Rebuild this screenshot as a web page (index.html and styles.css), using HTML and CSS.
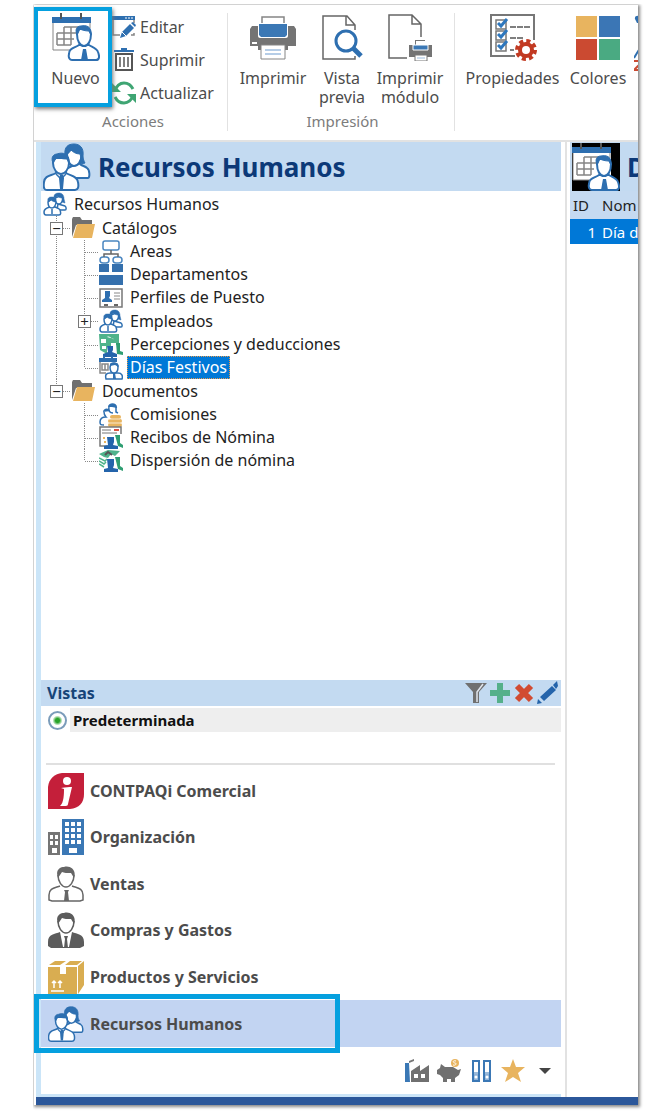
FILE: index.html
```html
<!DOCTYPE html>
<html lang="es">
<head>
<meta charset="utf-8">
<meta name="viewport" content="width=device-width, initial-scale=1">
<title>Recursos Humanos</title>
<link rel="stylesheet" href="styles.css">
</head>
<body>
<svg class="sprite" aria-hidden="true">
  <symbol id="people" viewBox="0 0 48 48">
    <g fill="#fff" stroke="#2e6fb0" stroke-width="2">
      <path d="M29 23c-2 1-4 2-6 3v9h22c2 0 2-8-1-10-2-2-5-2-7-4l-1-4h-7z"/>
      <path d="M24 11c0 7 3 12 7 12s8-5 8-12l-5-4h-8z"/>
      <path d="M22 12C21 4 25 1 31 1s10 4 9 12c0 3 1 5 2 7-2 1-5 1-6-1 2-3 2-5 1-8-4 0-7-2-9-4-1 2-3 4-6 5z" fill="#2e6fb0" stroke-width="1"/>
      <path d="M13 30c-5 3-11 2-12 9-1 7 1 8 3 8h28c3 0 4-3 3-8-1-6-7-6-12-9l-1-4h-8z"/>
      <path d="M10 20c0 6 4 11 8 11s8-5 8-11l-1-5H11z"/>
      <path d="M10 20c-3-7 2-9 4-9 5-2 13-1 12 9-1-1-1-3-2-4-5 0-8-1-10-2-1 2-3 4-4 6z" fill="#2e6fb0" stroke-width="1"/>
    </g>
    <path d="M17 32h3l1 3-1 11h-3l-1-11z" fill="#2e6fb0"/>
    <path d="M13 31l4 4M23 31l-4 4" stroke="#2e6fb0" stroke-width="1.500"/>
  </symbol>
  <symbol id="people-small" viewBox="0 0 24 24">
    <g fill="#fff" stroke="#2e6fb0" stroke-width="1.500">
      <path d="M15 12l7 2c1.500 1 1.500 4 0 4h-8z"/>
      <path d="M12 6c0 4 2 6 4 6s4-3 4-6l-3-2z"/>
      <path d="M11 5c0-3 2-4 5-4s5 2 5 6l1 4-3-1V6c-2 0-4-1-4-2-1 1-2 1-4 1z" fill="#2e6fb0" stroke-width=".5"/>
      <path d="M7 15c-4 1-6 2-6 5 0 2 1 3 2 3h13c2 0 2-2 1-5-1-2-3-2-5-3z"/>
      <path d="M5 10c0 4 2 6 4 6s4-3 4-6l-4-3z"/>
      <path d="M5 10c-1-5 2-5 4-5s5 0 4 5c-2 0-4-1-5-2-1 1-2 1-3 2z" fill="#2e6fb0" stroke-width=".5"/>
      <path d="M9 17v5"/>
    </g>
  </symbol>
  <symbol id="calendar" viewBox="0 0 48 48">
    <path d="M1 5h38v27h-9l-7 5H1z" fill="#fff"/>
    <path d="M1 10v27h18M38 10v5" fill="none" stroke="#858585"/>
    <path d="M0 4h39v6H0z" fill="#2e6fb0"/>
    <path d="M9 0v6M29 0v6" stroke="#555" stroke-width="2"/>
    <g fill="none" stroke="#858585" stroke-width="1.500"><path d="M12 14h15M5 20h22M5 26h17M5 32h14M5 20v12M12 14v18M19 14v18M26 14v4"/></g>
    <g fill="#fff" stroke="#2e6fb0" stroke-width="2">
      <path d="M27 32c-4 3-10 3-10 9-1 4 1 6 3 6h24c3 0 4-3 2-8-1-4-6-5-9-7z"/>
      <path d="M25 21c0 7 3 12 7 12s7-5 7-12l-2-5H26z"/>
      <path d="M25 22c-3-8 2-9 4-9 5-1 11 0 10 9l-2-4c-4 0-7-1-9-2-1 2-2 4-3 6z" fill="#2e6fb0" stroke-width="1"/>
    </g>
    <path d="M31 36h3l2 11h-7z" fill="#2e6fb0"/>
  </symbol>
  <symbol id="edit" viewBox="0 0 24 24">
    <path d="M1 3v17h7M22 4v4M22 18v2h-3" fill="none" stroke="#858585" stroke-width="1.500"/>
    <path d="M0 1h23v4H0z" fill="#2e6fb0"/><path d="M13 3h2M16 3h2M19 3h2" stroke="#fff" stroke-width="1"/>
    <path d="M10 17L18 9l4 4-8 8-6 2zM19 8l2-1 3 3-1 2z" fill="#2e6fb0"/><path d="M10 17l4 4" stroke="#fff"/>
  </symbol>
  <symbol id="trash" viewBox="0 0 24 24">
    <path d="M2 3h20M9 1h6" stroke="#2e6fb0" stroke-width="2"/>
    <path d="M4 6h16v16H4z" fill="#fff" stroke="#555" stroke-width="2"/><path d="M8 9v10M12 9v10M16 9v10" stroke="#555" stroke-width="1.500"/>
  </symbol>
  <symbol id="refresh" viewBox="0 0 24 24">
    <path d="M3 10C4 5 8 2 12 2c4 0 7 2 9 6M21 14c-1 5-5 8-9 8-4 0-7-2-9-6" fill="none" stroke="#3fa573" stroke-width="3"/>
    <path d="M0 2v9h9zM24 22v-9h-9z" fill="#3fa573"/>
  </symbol>
  <symbol id="printer" viewBox="0 0 48 48">
    <path d="M13 12V4h22v8" fill="#fff" stroke="#858585" stroke-width="1.500"/>
    <path d="M3 13h42l2 3v17h-8v4H9v-4H1V16z" fill="#747474"/>
    <path d="M9 10h30v13c0 1-1 2-2 2H11c-1 0-2-1-2-2z" fill="#fff"/>
    <path d="M10 11h28v11l-2 2H12l-2-2z" fill="#3b78b5"/>
    <path d="M12 32h24v14H12z" fill="#fff" stroke="#858585"/>
    <path d="M16 37h16M16 41h16" stroke="#9dbde0" stroke-width="1.500"/><path d="M3 30h5" stroke="#fff" stroke-width="2"/>
  </symbol>
  <symbol id="preview" viewBox="0 0 48 48">
    <path d="M37 17v-5L29 3H5v43h32v-3M28 3v9h9" fill="#fff" stroke="#666" stroke-width="1.500"/>
    <circle cx="28" cy="28" r="10" fill="#fff" stroke="#2e6fb0" stroke-width="3"/><path d="M35 35l8 8" stroke="#2e6fb0" stroke-width="5"/>
  </symbol>
  <symbol id="print-module" viewBox="0 0 48 48">
    <path d="M21 45H3V2h23l9 9v13M26 2v9h9" fill="#fff" stroke="#666" stroke-width="1.500"/>
    <path d="M29 32v-5h10v5M23 32h23v12H23z" fill="#747474"/><path d="M30 28h9v6h-9z" fill="#fff"/>
    <path d="M27 32h15v5H27z" fill="#3b78b5" stroke="#fff"/><path d="M29 42h12v6H29z" fill="#fff" stroke="#777"/><path d="M31 45h8" stroke="#9dbde0"/>
  </symbol>
  <symbol id="properties" viewBox="0 0 48 48">
    <path d="M26 43H2V2h43v25" fill="#fff" stroke="#777" stroke-width="2"/>
    <g fill="none" stroke="#777" stroke-width="1.500"><path d="M7 7h10v9H7zM7 18h10v9H7zM7 29h10v9H7z"/></g>
    <path d="M9 10l3 3 6-7M9 21l3 3 6-7M9 32l3 3 6-7" fill="none" stroke="#2e77bd" stroke-width="3"/>
    <path d="M21 14h20M21 25h13M21 37h4" stroke="#555" stroke-width="1.500" stroke-dasharray="6 1"/>
    <circle cx="37" cy="37" r="8" fill="#c23a22"/><circle cx="37" cy="37" r="9" fill="none" stroke="#c23a22" stroke-width="4" stroke-dasharray="4 3.070"/><circle cx="37" cy="37" r="4" fill="#fff"/>
  </symbol>
  <symbol id="colors" viewBox="0 0 48 48">
    <path d="M2 3h21v21H2z" fill="#e8b45f"/><path d="M25 3h21v21H25z" fill="#3b76b5"/><path d="M2 26h21v21H2z" fill="#cb4a31"/><path d="M25 26h21v21H25z" fill="#4aaa82"/>
  </symbol>
  <symbol id="more" viewBox="0 0 16 60">
    <path d="M1 6C0 2 6 2 9 5v5H3z" fill="#2e6fb0"/><path d="M0 45l6-10 6 10" fill="none" stroke="#2e6fb0" stroke-width="2"/><path d="M0 48h9l-9 9h9" fill="none" stroke="#cb4a31" stroke-width="2"/>
  </symbol>
  <symbol id="folder" viewBox="0 0 24 24">
    <path d="M1 21V3l1-2h7l2 3h10v5H5z" fill="#707070"/><path d="M6 8h18l-3 14H2z" fill="#e8b45f"/>
  </symbol>
  <symbol id="areas" viewBox="0 0 24 24">
    <g fill="#fff" stroke="#4a86c0" stroke-width="1.500"><rect x="4" y="1" width="16" height="9" rx="2"/><rect x="1" y="17" width="9" height="6" rx="3"/><rect x="14" y="17" width="9" height="6" rx="3"/></g>
    <path d="M12 10v4M5 17v-3h14v3" fill="none" stroke="#666" stroke-width="1.500"/>
  </symbol>
  <symbol id="departments" viewBox="0 0 24 24"><path d="M0 1h10v8H0zM13 1h11v8H13zM0 12h24v10H0z" fill="#3570ad"/></symbol>
  <symbol id="profile" viewBox="0 0 24 24">
    <path d="M1 3h22v18H1z" fill="#fff" stroke="#777" stroke-width="1.500"/><path d="M6 5h5v5l-1 2 3 2v2H3v-2l3-2z" fill="#2e6fb0"/>
    <path d="M15 7h6M15 10h6M15 13h6" stroke="#888"/><path d="M5 19h4M15 19h4" stroke="#666" stroke-width="2"/>
  </symbol>
  <symbol id="payroll" viewBox="0 0 24 24">
    <path d="M0 1h20v11h-3v-2h-5v3H8v8l-7-4z" fill="#4fb38b"/><path d="M2 6h5v4H2zM8 4c4-2 4 3 7 2M3 13h4v3H3z" fill="#fff"/>
    <path d="M8 13h6v4l-1 2 5 2v3H4v-3l5-2z" fill="#2464ab"/><path d="M17 10h4v8l3 1v3l-6-1z" fill="#2f9e72"/>
  </symbol>
  <symbol id="holidays" viewBox="0 0 24 24">
    <path d="M1 3v14h6M3 8h6v6H3zM6 8v6" fill="none" stroke="#888" stroke-width="1.500"/><path d="M0 2h18v4H0zM4 0h2v3H4zM12 0h2v3h-2z" fill="#2e6fb0"/>
    <g fill="#fff" stroke="#2e6fb0" stroke-width="1.500"><path d="M7 23c-1-4 0-6 4-6h8c4 0 5 3 4 6z"/><path d="M11 11c0 4 2 6 4 6s4-2 4-6l-1-3h-6z"/></g><path d="M11 10c-1-5 9-5 9 1l-4-2zM14 17h2l1 6h-3z" fill="#2e6fb0"/>
  </symbol>
  <symbol id="commissions" viewBox="0 0 24 24">
    <path d="M5 9c0 3 1 4 2 5-4 0-6 2-6 5 0 3 1 3 4 3M10 4c-1 4 1 6 4 6M17 4v5l2 1" fill="none" stroke="#2e6fb0" stroke-width="1.500"/>
    <path d="M4 9c0-4 6-5 7-1zM9 4c0-5 10-5 9 1l-5-1z" fill="#2e6fb0"/>
    <path d="M13 14h7M11 18h10M11 22h10" stroke="#e8b45f" stroke-width="4" stroke-linecap="round"/><path d="M10 16h11M10 20h12" stroke="#fff" stroke-width=".7"/>
  </symbol>
  <symbol id="receipts" viewBox="0 0 24 24">
    <path d="M8 20H1V1h21v7" fill="#fff" stroke="#777" stroke-width="1.500"/><path d="M3 4h9M3 7h15" stroke="#777"/><path d="M15 4h5" stroke="#dc5240" stroke-width="2"/><path d="M4 11h2v2H4zM5 15h2v2H5z" fill="#e8b45f"/>
    <path d="M8 11h7v5l-1 3 5 1v3H5v-3l4-1z" fill="#2464ab"/><path d="M16 9h5v8l3 2v3l-5-2z" fill="#2f9e72"/>
  </symbol>
  <symbol id="dispersion" viewBox="0 0 24 24">
    <path d="M0 5l9-4 12 1-5 5-4-2-3 4-4-1z" fill="#4fb38b"/><path d="M6 6l3-3 4 3" fill="none" stroke="#555" stroke-width="2"/><path d="M0 9l6 3 2-2M0 12l5 3 2-2M0 15l5 3" fill="none" stroke="#4fb38b" stroke-width="1.500"/>
    <path d="M8 10h7v6l-1 3 5 1v3H5v-3l4-1z" fill="#2464ab"/><path d="M16 8h5v9l3 2v3l-5-2z" fill="#2f9e72"/>
  </symbol>
  <symbol id="filter" viewBox="0 0 24 24"><path d="M1 2h22l-8 9v11H9V11z" fill="#707070"/><path d="M19 3l-6 8v10" fill="none" stroke="#e0e5ec" stroke-width="1.500"/></symbol>
  <symbol id="plus" viewBox="0 0 24 24"><path d="M9 2h6v7h7v6h-7v7H9v-7H2V9h7z" fill="#55b08a"/></symbol>
  <symbol id="cross" viewBox="0 0 24 24"><path d="M5 5l14 14M19 5L5 19" stroke="#d14b32" stroke-width="6"/></symbol>
  <symbol id="pencil" viewBox="0 0 24 24"><path d="M4 16L16 5l4 4L8 20zM17 4l4-4 1 5-2 3zM2 18l4 4-5 1z" fill="#2464ab"/></symbol>
  <symbol id="logo" viewBox="0 0 36 36">
    <path d="M0 36V14C1 5 7 1 14 0h22v21c0 9-5 14-14 15z" fill="#c41f3a"/><circle cx="19" cy="8" r="4" fill="#fff"/><path d="M13 15c5-1 8-1 11-1l-4 17c0 2-2 2-4 2h-4c4-3 4-13 4-17z" fill="#fff"/>
  </symbol>
  <symbol id="buildings" viewBox="0 0 36 36">
    <path d="M14 0h22v36H14z" fill="#3b78b5"/><path d="M0 13h12v23H0z" fill="#757575"/>
    <g fill="#fff"><path d="M17 3h4v4h-4zM23 3h4v4h-4zM29 3h4v4h-4zM17 9h4v4h-4zM23 9h4v4h-4zM29 9h4v4h-4zM17 15h4v4h-4zM23 15h4v4h-4zM29 15h4v4h-4zM17 21h4v4h-4zM23 21h4v4h-4zM29 21h4v4h-4zM21 29h8v5h-8z"/><path d="M2 16h3v4H2zM7 16h3v4H7zM2 22h3v4H2zM7 22h3v4H7zM4 29h5v5H4z"/></g>
  </symbol>
  <symbol id="seller" viewBox="0 0 36 36">
    <path d="M12 20C7 22 1 22 1 29v5l3 1h28l3-1v-5c0-7-6-7-11-9" fill="#fff" stroke="#666" stroke-width="1.500"/>
    <path d="M10 9c0 7 4 12 8 12s8-5 8-12" fill="#fff" stroke="#666" stroke-width="1.500"/><path d="M10 12C7 4 12 1 16 1c6-2 13 3 10 11l-3-5c-4 0-7 0-9-1z" fill="#666"/><path d="M16 24h5l-1 2 1 9h-5l1-9z" fill="#666"/>
  </symbol>
  <symbol id="buyer" viewBox="0 0 36 36">
    <path d="M12 20C7 22 0 22 0 30v4l3 2h29l4-2v-4c0-8-7-8-12-10z" fill="#5c5c5c"/><path d="M12 20l3 15h6l3-15z" fill="#fff"/><path d="M16 24h4l-1 3 1 9h-4l1-9z" fill="#5c5c5c"/>
    <path d="M10 9c0 7 4 12 8 12s8-5 8-12" fill="#fff" stroke="#5c5c5c" stroke-width="1.500"/><path d="M10 12C7 4 12 1 16 1c6-2 13 3 10 11l-3-5c-4 0-7 0-9-1z" fill="#5c5c5c"/>
  </symbol>
  <symbol id="box" viewBox="0 0 36 36">
    <path d="M0 8h29v28H0zM30 7l6-5v24l-6 9zM7 2h11l-6 4H1zM22 2h12l-5 4H17z" fill="#d9ad51"/><path d="M12 8h6v7h-6z" fill="#fff"/><path d="M6 29v-7M12 29v-7M4 24l2-2 2 2M10 24l2-2 2 2M3 32h13" fill="none" stroke="#fff" stroke-width="1.500"/>
  </symbol>
  <symbol id="factory" viewBox="0 0 24 24"><path d="M0 4h4l1 19H0z" fill="#3b78b5"/><path d="M4 2l5-2v2L4 4z" fill="#777"/><path d="M6 23V12l9-6v6l9-6v17z" fill="#707070"/><path d="M9 15h4v4H9zM16 15h4v4h-4z" fill="#fff"/></symbol>
  <symbol id="piggy" viewBox="0 0 24 24"><path d="M4 5l4 3h8l5 3 3-1-2 6-4 3v4h-4v-3h-4v3H6v-4l-3-3-3-1v-4l3-2z" fill="#707070"/><circle cx="18" cy="4" r="4" fill="#e8b45f"/><path d="M19 2c-4-1-3 2-1 2s1 3-2 2" fill="none" stroke="#fff"/></symbol>
  <symbol id="binders" viewBox="0 0 24 24"><path d="M4 2h6v20H4zM15 2h6v20h-6z" fill="#fff" stroke="#3b78b5" stroke-width="2"/><path d="M5 15h4v6H5zM16 15h4v6h-4z" fill="#8fb3d8"/><path d="M4 14h6M15 14h6" stroke="#3b78b5"/><circle cx="7" cy="18" r="1.500" fill="#fff"/><circle cx="18" cy="18" r="1.500" fill="#fff"/></symbol>
  <symbol id="star" viewBox="0 0 24 24"><path d="M12 0l3 8h9l-7 6 3 9-8-5-8 5 3-9-7-6h9z" fill="#e8b45f"/></symbol>
  <symbol id="caret" viewBox="0 0 24 24"><path d="M6 9h12l-6 6z" fill="#444"/></symbol>
</svg>

<div class="window">
  <header class="ribbon">
    <section class="group">
      <div class="group-tools">
        <button class="tool tool-new"><svg class="i48"><use href="#calendar"/></svg><span>Nuevo</span></button>
        <div class="stack">
          <button class="small-tool"><svg class="i24"><use href="#edit"/></svg>Editar</button>
          <button class="small-tool"><svg class="i24"><use href="#trash"/></svg>Suprimir</button>
          <button class="small-tool"><svg class="i24"><use href="#refresh"/></svg>Actualizar</button>
        </div>
      </div>
      <div class="group-name">Acciones</div>
    </section>
    <section class="group group-print">
      <div class="group-tools">
        <button class="tool tool-print"><svg class="i48"><use href="#printer"/></svg><span>Imprimir</span></button>
        <button class="tool tool-preview"><svg class="i48"><use href="#preview"/></svg><span>Vista<br>previa</span></button>
        <button class="tool tool-module"><svg class="i48"><use href="#print-module"/></svg><span>Imprimir<br>módulo</span></button>
      </div>
      <div class="group-name">Impresión</div>
    </section>
    <section class="group group-last">
      <div class="group-tools">
        <button class="tool tool-properties"><svg class="i48"><use href="#properties"/></svg><span>Propiedades</span></button>
        <button class="tool tool-colors"><svg class="i48"><use href="#colors"/></svg><span>Colores</span></button>
        <button class="tool-more" aria-label="Más"><svg class="more-icon"><use href="#more"/></svg></button>
      </div>
    </section>
  </header>

  <main class="workspace">
    <aside class="sidebar">
      <h1 class="panel-title"><svg class="i48"><use href="#people"/></svg>Recursos Humanos</h1>
      <div class="tree">
        <div class="row row-parent"><svg class="i24"><use href="#people-small"/></svg><span class="label">Recursos Humanos</span></div>
        <div class="row row-parent"><span class="guide tee"><button class="expander" aria-label="Contraer Catálogos">−</button></span><svg class="i24"><use href="#folder"/></svg><span class="label">Catálogos</span></div>
        <div class="row"><span class="guide line"></span><span class="guide tee"></span><svg class="i24"><use href="#areas"/></svg><span class="label">Areas</span></div>
        <div class="row"><span class="guide line"></span><span class="guide tee"></span><svg class="i24"><use href="#departments"/></svg><span class="label">Departamentos</span></div>
        <div class="row"><span class="guide line"></span><span class="guide tee"></span><svg class="i24"><use href="#profile"/></svg><span class="label">Perfiles de Puesto</span></div>
        <div class="row row-parent"><span class="guide line"></span><span class="guide tee"><button class="expander" aria-label="Expandir Empleados">+</button></span><svg class="i24"><use href="#people-small"/></svg><span class="label">Empleados</span></div>
        <div class="row"><span class="guide line"></span><span class="guide tee"></span><svg class="i24"><use href="#payroll"/></svg><span class="label">Percepciones y deducciones</span></div>
        <div class="row"><span class="guide line"></span><span class="guide end"></span><svg class="i24"><use href="#holidays"/></svg><span class="label selected">Días Festivos</span></div>
        <div class="row row-parent"><span class="guide end"><button class="expander" aria-label="Contraer Documentos">−</button></span><svg class="i24"><use href="#folder"/></svg><span class="label">Documentos</span></div>
        <div class="row"><span class="guide"></span><span class="guide tee"></span><svg class="i24"><use href="#commissions"/></svg><span class="label">Comisiones</span></div>
        <div class="row"><span class="guide"></span><span class="guide tee"></span><svg class="i24"><use href="#receipts"/></svg><span class="label">Recibos de Nómina</span></div>
        <div class="row"><span class="guide"></span><span class="guide end"></span><svg class="i24"><use href="#dispersion"/></svg><span class="label">Dispersión de nómina</span></div>
      </div>
      <section class="views">
        <div class="views-bar">
          <h2 class="views-title">Vistas</h2>
          <button class="icon-button" aria-label="Filtrar"><svg class="i24"><use href="#filter"/></svg></button>
          <button class="icon-button" aria-label="Agregar"><svg class="i24"><use href="#plus"/></svg></button>
          <button class="icon-button" aria-label="Eliminar"><svg class="i24"><use href="#cross"/></svg></button>
          <button class="icon-button" aria-label="Modificar"><svg class="i24"><use href="#pencil"/></svg></button>
        </div>
        <div class="view"><input class="radio" type="radio" id="default-view" name="view" checked><label class="view-name" for="default-view">Predeterminada</label></div>
      </section>
      <nav class="modules">
        <a class="module" href="#"><svg class="i36"><use href="#logo"/></svg>CONTPAQi Comercial</a>
        <a class="module" href="#"><svg class="i36"><use href="#buildings"/></svg>Organización</a>
        <a class="module" href="#"><svg class="i36"><use href="#seller"/></svg>Ventas</a>
        <a class="module" href="#"><svg class="i36"><use href="#buyer"/></svg>Compras y Gastos</a>
        <a class="module" href="#"><svg class="i36"><use href="#box"/></svg>Productos y Servicios</a>
        <a class="module module-current" href="#"><svg class="i36"><use href="#people"/></svg>Recursos Humanos</a>
      </nav>
      <div class="shortcuts">
        <button class="icon-button" aria-label="Producción"><svg class="i24"><use href="#factory"/></svg></button>
        <button class="icon-button" aria-label="Finanzas"><svg class="i24"><use href="#piggy"/></svg></button>
        <button class="icon-button" aria-label="Archivo"><svg class="i24"><use href="#binders"/></svg></button>
        <button class="icon-button" aria-label="Favoritos"><svg class="i24"><use href="#star"/></svg></button>
        <button class="icon-button" aria-label="Más módulos"><svg class="i24"><use href="#caret"/></svg></button>
      </div>
    </aside>
    <section class="content">
      <h2 class="panel-title"><svg class="i48 dark"><use href="#calendar"/></svg>D</h2>
      <table class="records">
        <thead><tr><th class="id">ID</th><th>Nom</th></tr></thead>
        <tbody><tr><td class="id">1</td><td>Día d</td></tr></tbody>
      </table>
    </section>
  </main>
  <footer class="status"></footer>
</div>
</body>
</html>
```
FILE: styles.css
```css
* { box-sizing: border-box; }
body {
  margin: 0;
  padding: 5px 9px 9px 34px;
  background: #fff;
  font-family: "Noto Sans", "Open Sans", sans-serif;
  font-size: 16px;
  color: #222;
}
button { margin: 0; padding: 0; border: 0; background: none; font: inherit; color: inherit; }
h1, h2 { margin: 0; }
svg { display: block; flex: none; }
.sprite { position: absolute; width: 0; height: 0; }
.i24 { width: 24px; height: 24px; }
.i36 { width: 36px; height: 36px; }
.i48 { width: 48px; height: 48px; }

.window {
  display: flex;
  flex-direction: column;
  min-height: calc(100vh - 14px);
  padding-left: 2px;
  background: #fff;
  box-shadow: 1px 1px 3px 1px #888;
  clip-path: inset(-1px -9px -9px -1px);
}

.ribbon {
  display: flex;
  height: 137px;
  margin-left: -2px;
  padding: 8px 0 9px 2px;
  overflow-x: clip;
  border-bottom: 2px solid #e2e2e2;
  color: #4c4c4c;
}
.group { display: flex; flex-direction: column; justify-content: space-between; flex: none; width: 192px; border-right: 1px solid #e2e2e2; }
.group-print { width: 227px; }
.group-last { flex: 1; min-width: 0; border: 0; }
.group-tools { display: flex; align-items: flex-start; }
.group-name { padding-left: 3px; text-align: center; font-size: 15px; line-height: 20px; color: #7c7c7c; }
.tool { display: flex; flex: none; flex-direction: column; align-items: center; gap: 8px; line-height: 19px; }
.tool-new { position: relative; width: 76px; padding-left: 3px; }
.tool-new::after {
  content: "";
  position: absolute;
  inset: -6px 0 -19px -2px;
  border: 4px solid #05a0df;
  box-shadow: 1px 2px 4px #777;
}
.stack { display: grid; gap: 9px; padding-top: 2px; }
.small-tool { display: flex; align-items: center; gap: 4px; line-height: 24px; }
.tool-print { width: 90px; }
.tool-preview { width: 48px; }
.tool-module { width: 88px; }
.tool-properties { width: 115px; }
.tool-colors { width: 56px; }
.tool-more { padding-left: 8px; }
.more-icon { width: 16px; height: 60px; }

.workspace { display: flex; flex: 1; }
.sidebar {
  display: flex;
  flex: 1;
  flex-direction: column;
  min-width: 0;
  margin-right: 4px;
  border-left: 5px solid #cbe5f8;
  border-bottom: 3px solid #cbe5f8;
}
.content { flex: none; width: 73px; padding-left: 3px; overflow: hidden; border-left: 2px solid #e2e2e2; }
.panel-title {
  display: flex;
  align-items: center;
  gap: 7px;
  height: 49px;
  padding-left: 2px;
  background: #c3daf1;
  font-size: 26px;
  color: #0c3978;
}
.dark { background: #000; }

.tree { flex: 1; padding: 1px 0 24px 2px; }
.row { display: flex; align-items: center; height: 23px; white-space: nowrap; }
.row-parent { height: 24px; }
.guide {
  --down: repeating-linear-gradient(#888 0 1px, transparent 1px 2px) 13px 0 / 1px;
  --across: repeating-linear-gradient(90deg, #888 0 1px, transparent 1px 2px) 14px 12px / 14px 1px no-repeat;
  display: flex;
  align-items: center;
  flex: none;
  width: 28px;
  height: 100%;
  padding-left: 7px;
}
.line { background: var(--down) 100% no-repeat; }
.tee { background: var(--down) 100% no-repeat, var(--across); }
.end { background: var(--down) 12px no-repeat, var(--across); }
.expander { width: 13px; height: 13px; border: 1px solid #777; background: #fff; font-size: 15px; line-height: 9px; }
.label { margin-left: 4px; padding: 0 3px; line-height: 21px; }
.selected { border: 1px dotted #e89a4c; padding: 0 2px; background: #0078d7; color: #fff; }

.views { padding-bottom: 31px; }
.views-bar { display: flex; align-items: center; height: 26px; padding: 0 1px 0 6px; background: #c3daf1; }
.views-title { flex: 1; font-size: 16px; color: #164478; }
.view { display: flex; align-items: center; gap: 3px; padding: 2px 0 0 7px; font-size: 15px; font-weight: bold; color: #111; }
.radio { appearance: none; width: 19px; height: 19px; margin: 0; border: 2px solid #7b9cba; border-radius: 50%; background: radial-gradient(circle, #29a329 0 2px, #fff 5px); }
.view-name { flex: 1; padding-left: 3px; background: #eee; line-height: 24px; }

.modules::before { content: ""; display: block; margin: 0 6px 0 5px; padding-bottom: 2px; border-top: 2px solid #e0e0e0; }
.module { display: flex; align-items: center; gap: 6px; height: 46px; padding-left: 7px; font-weight: bold; color: #4c4c4c; text-decoration: none; }
.module:nth-child(odd) { height: 47px; }
.module-current { position: relative; height: 47px; background: #c2d4f2; }
.module-current::after { content: ""; position: absolute; inset: -6px 221px -6px -7px; border: 5px solid #05a0df; }
.shortcuts { display: flex; justify-content: flex-end; align-items: center; gap: 8px; height: 47px; padding-right: 4px; }

.records { width: 120px; border-collapse: collapse; table-layout: fixed; font-size: 15px; white-space: nowrap; }
.records th, .records td { height: 25px; padding: 0 0 0 3px; text-align: left; font-weight: normal; }
.records th { height: 28px; background: #c5daf1; }
.records td { background: #0078d7; color: #fff; }
.records .id { width: 29px; }
.records td.id { padding-right: 3px; text-align: right; }
.status { height: 8px; background: #2b579a; }
```
